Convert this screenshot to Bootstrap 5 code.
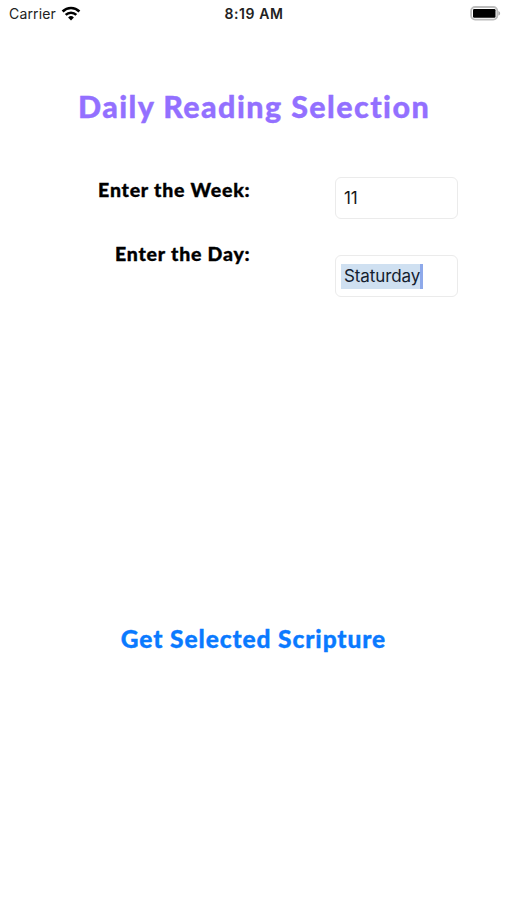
<!DOCTYPE html>
<html lang="en">
<head>
<meta charset="utf-8">
<meta name="viewport" content="width=device-width, initial-scale=1">
<title>Daily Reading Selection</title>
<link href="https://cdn.jsdelivr.net/npm/bootstrap@5.3.0/dist/css/bootstrap.min.css" rel="stylesheet">
<style>
body { font-family: Inter, "Liberation Sans", sans-serif; color: #111; background: #fff; }
.screen { height: 900px; }
.status-bar { height: 28px; padding: 0 6px 0 9px; font-size: 14px; line-height: 28px; color: #222; }
.status-bar > div { flex: 1 1 0; }
.status-bar .clock { font-weight: 600; letter-spacing: .55px; padding-right: 2px; }
.carrier-name { letter-spacing: .15px; }
.avenir { font-family: Lato, "Open Sans", sans-serif; font-weight: 900; white-space: nowrap; font-variant-ligatures: none; -webkit-text-stroke: .35px currentColor; }
.title { margin-top: 57px; height: 42px; font-size: 30.5px; line-height: 42px; letter-spacing: 1.4px; padding-left: 1px; color: #9370ff; }
.form-area { margin-top: 50px; padding-right: 49px; }
.labels { width: 250.5px; color: #000; font-size: 19.5px; line-height: 26px; letter-spacing: .78px; }
.labels label { height: 26px; }
.labels label + label { margin-top: 38px; }
.fields { width: 123px; gap: 36px; }
.field { height: 42px; border: 1px solid #ebebeb; border-radius: 6px; padding: 0 5px; font-size: 17px; color: #161616; }
.field span { padding: 0 0 0 3px; height: 25px; line-height: 25px; letter-spacing: -.1px; }
.field .selected-text { background: #cfe0f1; border-right: 3px solid #8ea9ea; color: #14202e; }
.get-btn { margin-top: 320px; padding: 0; height: 44px; border: 0; font-size: 24.5px; line-height: 44px; letter-spacing: .9px; color: #0a7aff; }
</style>
<script src="https://cdn.jsdelivr.net/npm/bootstrap@5.3.0/dist/js/bootstrap.bundle.min.js"></script>
</head>
<body>
<main class="screen d-flex flex-column overflow-hidden">
  <header class="status-bar d-flex align-items-center">
    <div class="d-flex align-items-center">
      <span class="carrier-name">Carrier</span>
      <svg class="ms-1" width="22" height="16" viewBox="0 0 20 16" fill="none" stroke="#000" stroke-width="2.6" aria-label="Wi-Fi">
        <path d="M1.6 5.5a12 12 0 0 1 16.8 0"/>
        <path d="M4.7 8.9a7.6 7.6 0 0 1 10.6 0"/>
        <path d="M10 14.5 7.1 11.5a4.1 4.1 0 0 1 5.8 0z" fill="#000" stroke="none"/>
      </svg>
    </div>
    <div class="text-center clock">8:19 AM</div>
    <div class="d-flex justify-content-end">
      <svg width="31" height="16" viewBox="0 0 31 16" aria-label="Battery">
        <rect x="1.1" y="1" width="26.2" height="12.6" rx="4" fill="#fff" stroke="#bcbcbc" stroke-width="1.8"/>
        <rect x="3" y="3" width="22.5" height="8.8" rx="1.2" fill="#000"/>
        <path d="M28.4 5c2.3.8 2.3 3.8 0 4.6z" fill="#aaa"/>
      </svg>
    </div>
  </header>

  <h1 class="title avenir text-center mb-0">Daily Reading Selection</h1>

  <form class="form-area d-flex justify-content-between align-items-start">
    <div class="labels avenir d-flex flex-column align-items-end">
      <label>Enter the Week:</label>
      <label>Enter the Day:</label>
    </div>
    <div class="fields d-flex flex-column">
      <div class="field d-flex align-items-center"><span>11</span></div>
      <div class="field d-flex align-items-center"><span class="selected-text">Staturday</span></div>
    </div>
  </form>

  <button type="button" class="get-btn btn avenir align-self-center">Get Selected Scripture</button>
</main>
</body>
</html>
